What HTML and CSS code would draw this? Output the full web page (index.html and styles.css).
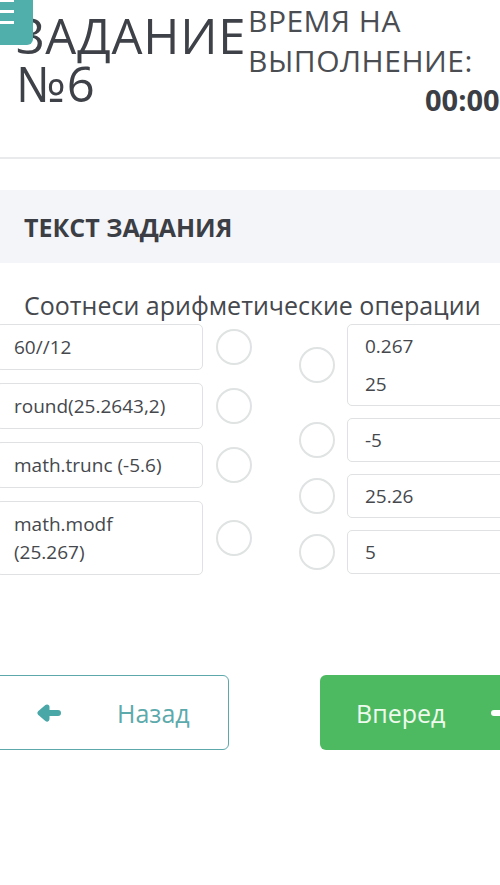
FILE: index.html
```html
<!DOCTYPE html>
<html lang="ru">
<head>
    <meta charset="UTF-8">
    <title>Задание №6</title>
    <link rel="stylesheet" href="styles.css">
</head>
<body>
    <div class="page">
        <!-- Кнопка меню -->
        <button class="menu-btn" type="button">
            <span class="bar"></span>
            <span class="bar"></span>
            <span class="bar"></span>
        </button>

        <!-- Шапка задания -->
        <div class="task-header">
            <h1 class="task-title">
                <span class="title-line">ЗАДАНИЕ</span>
                <span class="title-line">№6</span>
            </h1>
            <div class="timer">
                <div class="timer-label">ВРЕМЯ НА<br>ВЫПОЛНЕНИЕ:</div>
                <div class="timer-value">00:00</div>
            </div>
        </div>

        <div class="task-band">ТЕКСТ ЗАДАНИЯ</div>
        <p class="task-text">Соотнеси арифметические операции</p>

        <!-- Соответствие -->
        <div class="match">
            <div class="match-col match-left">
                <div class="match-row">
                    <div class="match-box">60//12</div>
                    <span class="dot"></span>
                </div>
                <div class="match-row">
                    <div class="match-box">round(25.2643,2)</div>
                    <span class="dot"></span>
                </div>
                <div class="match-row">
                    <div class="match-box">math.trunc (-5.6)</div>
                    <span class="dot"></span>
                </div>
                <div class="match-row">
                    <div class="match-box">math.modf<br>(25.267)</div>
                    <span class="dot"></span>
                </div>
            </div>
            <div class="match-col match-right">
                <div class="match-row">
                    <span class="dot"></span>
                    <div class="match-box">
                        <p class="line">0.267</p>
                        <p class="line">25</p>
                    </div>
                </div>
                <div class="match-row">
                    <span class="dot"></span>
                    <div class="match-box">-5</div>
                </div>
                <div class="match-row">
                    <span class="dot"></span>
                    <div class="match-box">25.26</div>
                </div>
                <div class="match-row">
                    <span class="dot"></span>
                    <div class="match-box">5</div>
                </div>
            </div>
        </div>

        <!-- Навигация -->
        <div class="nav">
            <button class="btn btn-back" type="button">
                <svg class="arrow" width="26" height="18" viewBox="0 0 26 18">
                    <path d="M11 3 L4 9 L11 15 Z" fill="currentColor" stroke="currentColor" stroke-width="5" stroke-linejoin="round"/>
                    <line x1="9" y1="9" x2="22" y2="9" stroke="currentColor" stroke-width="6" stroke-linecap="round"/>
                </svg>
                <span>Назад</span>
            </button>
            <button class="btn btn-next" type="button">
                <span>Вперед</span>
                <svg class="arrow" width="26" height="18" viewBox="0 0 26 18">
                    <line x1="4" y1="9" x2="17" y2="9" stroke="currentColor" stroke-width="6" stroke-linecap="round"/>
                    <path d="M15 3 L22 9 L15 15 Z" fill="currentColor" stroke="currentColor" stroke-width="5" stroke-linejoin="round"/>
                </svg>
            </button>
        </div>
    </div>
</body>
</html>
```

FILE: styles.css
```css
:root {
    --text-color: #3b3e44;
    --teal: #50aeab;
    --green: #4dba61;
    --border-color: #dfe1e3;
}

html, body {
    margin: 0;
    padding: 0;
    width: 500px;
    height: 885px;
    overflow: hidden;
    background: #ffffff;
    font-family: 'Open Sans', 'Noto Sans', Arial, sans-serif;
    color: var(--text-color);
}
.page {
    position: relative;
    width: 500px;
    height: 885px;
    overflow: hidden;
}
.menu-btn {
    position: absolute;
    top: 0;
    left: 0;
    z-index: 10;
    width: 33px;
    height: 45px;
    padding: 0;
    border: none;
    border-bottom-right-radius: 6px;
    background-color: var(--teal);
    display: flex;
    flex-direction: column;
    align-items: flex-start;
    gap: 8px;
}
.menu-btn .bar {
    display: block;
    width: 14px;
    height: 3px;
    background: #ffffff;
    margin-top: -1px;
}
.menu-btn .bar + .bar {
    margin-top: 0;
}

/* Шапка */
.task-header {
    display: flex;
    height: 157px;
    border-bottom: 2px solid #e9eaeb;
    box-sizing: content-box;
}
.task-title {
    flex: 0 0 232px;
    margin: 0;
    padding: 11px 0 0 16px;
    font-size: 49px;
    font-weight: 400;
    line-height: 48px;
    white-space: nowrap;
    letter-spacing: 0.8px;
    color: #3e4147;
}
.title-line {
    display: block;
    height: 48px;
}
.timer {
    padding-top: 1px;
    white-space: nowrap;
}
.timer-label {
    font-size: 30px;
    line-height: 40px;
    letter-spacing: 0.5px;
    color: #4a4d52;
}
.timer-value {
    margin-left: 177px;
    font-size: 29px;
    font-weight: 700;
    line-height: 38px;
}

/* Текст задания */
.task-band {
    margin-top: 31px;
    height: 73px;
    padding: 2px 0 0 24px;
    box-sizing: border-box;
    background-color: #f4f5f8;
    font-size: 25px;
    font-weight: 700;
    line-height: 71px;
}
.task-text {
    margin: 26px 0 3px 24px;
    font-size: 25px;
    line-height: 32px;
    white-space: nowrap;
    color: #45484d;
}

/* Соответствие */
.match {
    display: flex;
    margin-left: -4px;
}
.match-col {
    display: flex;
    flex-direction: column;
}
.match-left {
    gap: 13px;
}
.match-right {
    gap: 12px;
    margin-left: 47px;
}
.match-row {
    display: flex;
    align-items: center;
}
.match-left .match-row {
    gap: 13px;
}
.match-right .match-row {
    gap: 12px;
}
.match-box {
    border: 1px solid var(--border-color);
    border-radius: 5px;
    font-size: 19px;
    line-height: 28px;
    color: #45484d;
}
.match-left .match-box {
    width: 207px;
    box-sizing: border-box;
    padding: 8px 8px 8px 17px;
}
.match-right .match-box {
    width: 220px;
    box-sizing: border-box;
    padding: 7px 17px;
}
.match-box .line {
    margin: 0;
}
.match-box .line + .line {
    margin-top: 10px;
}
.dot {
    flex: 0 0 auto;
    width: 36px;
    height: 36px;
    box-sizing: border-box;
    border: 2px solid #e0e3e3;
    border-radius: 50%;
}

/* Навигация */
.nav {
    display: flex;
    gap: 91px;
    margin-top: 100px;
    margin-left: -20px;
}
.btn {
    flex-shrink: 0;
    display: flex;
    align-items: center;
    height: 75px;
    box-sizing: border-box;
    border-radius: 6px;
    font-family: inherit;
    font-size: 25px;
    cursor: pointer;
}
.btn-back {
    width: 249px;
    padding: 0 0 0 55px;
    gap: 55px;
    border: 1.5px solid #5ca8aa;
    background: #ffffff;
    color: #5caaac;
}
.btn-back .arrow {
    color: #4aa7a8;
}
.btn-next {
    width: 230px;
    padding: 0 0 0 36px;
    gap: 45px;
    border: none;
    background-color: var(--green);
    color: #eefaee;
}
.btn-next .arrow {
    color: #ffffff;
}
```
